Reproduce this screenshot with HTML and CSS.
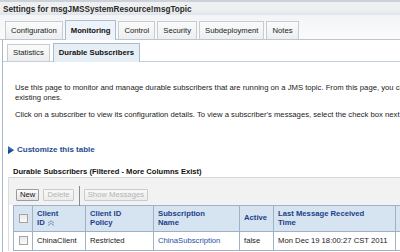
FILE: index.html
```html
<!DOCTYPE html>
<html lang="en">
<head>
    <meta charset="UTF-8">
    <title>Settings for msgJMSSystemResource!msgTopic</title>
    <link rel="stylesheet" href="styles.css">
</head>
<body>

    <!-- Title bar -->
    <div class="titlebar">Settings for msgJMSSystemResource!msgTopic</div>

    <!-- Main tabs -->
    <div class="tabs">
        <div class="tab">Configuration</div>
        <div class="tab active">Monitoring</div>
        <div class="tab">Control</div>
        <div class="tab">Security</div>
        <div class="tab">Subdeployment</div>
        <div class="tab">Notes</div>
    </div>

    <div class="panel">
        <!-- Sub tabs -->
        <div class="subtabs">
            <div class="subtab">Statistics</div>
            <div class="subtab active">Durable Subscribers</div>
        </div>

        <div class="content">
            <p class="intro">Use this page to monitor and manage durable subscribers that are running on a JMS topic. From this page, you can create new subscribers or delete<br>existing ones.</p>
            <p class="intro second">Click on a subscriber to view its configuration details. To view a subscriber's messages, select the check box next to it and click Show Messages.</p>

            <div class="customize">
                <svg width="6" height="8" viewBox="0 0 6 8"><polygon points="0,0 6,4 0,8" fill="#2f6db5"/><polygon points="0,4 6,4 0,8" fill="#1c4b8c"/></svg>
                <span>Customize this table</span>
            </div>

            <div class="table-title">Durable Subscribers (Filtered - More Columns Exist)</div>

            <div class="table-box">
                <div class="toolbar">
                    <button class="btn">New</button>
                    <button class="btn disabled">Delete</button>
                    <span class="divider"></span>
                    <button class="btn disabled">Show Messages</button>
                </div>

                <table class="grid">
                    <colgroup>
                        <col class="c-check">
                        <col class="c-id">
                        <col class="c-policy">
                        <col class="c-sub">
                        <col class="c-active">
                        <col class="c-time">
                        <col class="c-more">
                    </colgroup>
                    <tr>
                        <th class="check"><span class="box"></span></th>
                        <th>Client<br>ID <svg class="sort" width="8" height="6" viewBox="0 0 8 6"><polyline points="1,3 4,0.8 7,3" fill="none" stroke="#7d93b0" stroke-width="1"/><polyline points="1,5.5 4,3.3 7,5.5" fill="none" stroke="#7d93b0" stroke-width="1"/></svg></th>
                        <th>Client ID<br>Policy</th>
                        <th>Subscription<br>Name</th>
                        <th>Active</th>
                        <th>Last Message Received<br>Time</th>
                        <th></th>
                    </tr>
                    <tr>
                        <td class="check"><span class="box"></span></td>
                        <td>ChinaClient</td>
                        <td>Restricted</td>
                        <td><a href="#">ChinaSubscription</a></td>
                        <td>false</td>
                        <td>Mon Dec 19 18:00:27 CST 2011</td>
                        <td></td>
                    </tr>
                </table>
            </div>
        </div>
    </div>

</body>
</html>
```

FILE: styles.css
```css
/* General */
* {
    box-sizing: border-box;
}

body {
    margin: 0;
    width: 400px;
    height: 252px;
    overflow: hidden;
    background-color: #fff;
    font-family: "Liberation Sans", Arial, sans-serif;
    font-size: 7.7px;
    color: #222;
}

/* Title bar */
.titlebar {
    height: 15px;
    padding: 3px 0 0 3px;
    border-top: 2px solid #cdd2d8;
    background: linear-gradient(#eef0f2 0, #eef0f2 60%, #e0e4e8 100%);
    font-size: 8.2px;
    font-weight: bold;
    color: #2a2a2a;
    white-space: nowrap;
}

/* Main tabs */
.tabs {
    display: flex;
    align-items: flex-end;
    gap: 2px;
    height: 25px;
    padding-left: 5px;
    background: linear-gradient(#f3f4f6, #fbfbfc);
    border-bottom: 1px solid #bcc6d1;
}

.tab {
    height: 18px;
    line-height: 17px;
    padding: 0 5px;
    border: 1px solid #c6ccd2;
    border-bottom: none;
    background: linear-gradient(#fbfbfb, #eceeef);
    white-space: nowrap;
}

.tab.active {
    height: 20px;
    line-height: 19px;
    margin-bottom: -1px;
    border-color: #a9bccf;
    background: #edf3f9;
    font-weight: bold;
    color: #111;
}

/* Panel under tabs */
.panel {
    margin-left: 2px;
    border-left: 1px solid #a8b8c9;
    height: 300px;
}

.subtabs {
    display: flex;
    align-items: flex-end;
    gap: 3px;
    height: 22px;
    padding-left: 4px;
    border-bottom: 1px solid #c3cfdb;
}

.subtab {
    height: 17px;
    line-height: 16px;
    padding: 0 5px;
    border: 1px solid #c6ccd2;
    border-bottom: none;
    background: linear-gradient(#fbfbfb, #eceeef);
    white-space: nowrap;
}

.subtab.active {
    height: 19px;
    line-height: 18px;
    margin-bottom: -1px;
    border-color: #a9bccf;
    background: #e6eef6;
    font-weight: bold;
    color: #111;
}

/* Content */
.content {
    padding-left: 5px;
}

.intro {
    margin: 21px 0 0 7px;
    line-height: 9.5px;
    white-space: nowrap;
}

.intro.second {
    margin-top: 8px;
}

.customize {
    display: flex;
    align-items: center;
    gap: 3px;
    margin-top: 25px;
    height: 10px;
    font-weight: bold;
    color: #1f4b8e;
    font-size: 8px;
}

.table-title {
    margin: 12px 0 0 5px;
    height: 10px;
    font-weight: bold;
    font-size: 7.6px;
    color: #111;
    white-space: nowrap;
}

.table-box {
    border-left: 1px solid #dcdcdc;
}

.toolbar {
    display: flex;
    align-items: center;
    gap: 4px;
    height: 28px;
    padding: 7px 0 0 7px;
    background-color: #f2f2f2;
    border-top: 1px solid #d6d6d6;
}

.btn {
    height: 12px;
    padding: 0 3px;
    font-family: inherit;
    font-size: 7.7px;
    line-height: 10px;
    color: #111;
    border: 1px solid #9c9c9c;
    border-radius: 1px;
    background: linear-gradient(#fdfdfd, #e2e2e2);
}

.btn.disabled {
    color: #b5b5b5;
    border-color: #cbcbcb;
    background: linear-gradient(#f8f8f8, #ececec);
}

.divider {
    width: 1px;
    height: 20px;
    margin: 0 0 -3px 1px;
    background-color: #8a8a8a;
}

/* Table */
.grid {
    margin-left: 4px;
    border-collapse: collapse;
    table-layout: fixed;
    width: 420px;
}

.c-check { width: 19px; }
.c-id { width: 53px; }
.c-policy { width: 68px; }
.c-sub { width: 86px; }
.c-active { width: 34px; }
.c-time { width: 122px; }
.c-more { width: 38px; }

.grid th,
.grid td {
    border: 1px solid #9fb1c4;
    padding: 0 4px;
    text-align: left;
    vertical-align: middle;
    white-space: nowrap;
    overflow: hidden;
}

.grid th {
    height: 26px;
    line-height: 9.5px;
    background-color: #d6e4f2;
    color: #1d3f8a;
    font-weight: bold;
    font-size: 7.7px;
}

.grid td {
    height: 19px;
    color: #222;
}

.grid .check {
    padding: 0 0 0 5px;
}

.box {
    display: block;
    width: 9px;
    height: 9px;
    border: 1px solid #a3a3a3;
    background: linear-gradient(#e9e9e9, #fafafa);
}

.sort {
    vertical-align: -1px;
}

.grid a {
    color: #1f4fa0;
    text-decoration: none;
}
```
